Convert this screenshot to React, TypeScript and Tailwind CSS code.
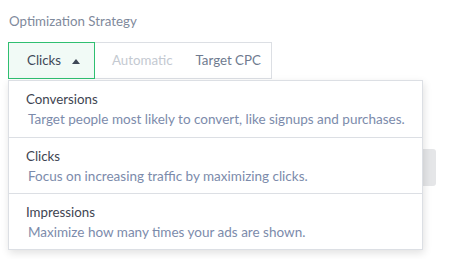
import { useState } from 'react';

const OPTIONS = [
  { title: 'Conversions', desc: 'Target people most likely to convert, like signups and purchases.' },
  { title: 'Clicks', desc: 'Focus on increasing traffic by maximizing clicks.' },
  { title: 'Impressions', desc: 'Maximize how many times your ads are shown.' },
];

export default function App() {
  const [selected, setSelected] = useState('Clicks');

  return (
    <div className="w-[469px] h-[259px] bg-white font-['Lato',sans-serif] relative overflow-hidden">
      <div className="pl-[8px] pt-[12px]">
        {/* Label */}
        <p className="text-[13.3px] leading-[18px] text-[#7f8a9c] pl-[1px]">Optimization Strategy</p>

        {/* Segmented control */}
        <div className="mt-[12px] flex w-[264px] h-[37px] border border-[#dcdfe4] relative">
          <button className="flex items-center gap-[11px] w-[87px] -m-px h-[37px] pl-[18px] border border-[#2fbf71] bg-[#f1faf6] text-[13.3px] text-[#3e4857]">
            {selected}
            <svg width="8" height="5" viewBox="0 0 8 5" className="mt-[1px]">
              <path d="M0 5 L4 0 L8 5 Z" fill="#3e4857" />
            </svg>
          </button>
          <span className="flex items-center pl-[18px] text-[13.3px] text-[#c4c9d1]">Automatic</span>
          <span className="flex items-center pl-[23px] text-[13.3px] text-[#6f7b8f]">Target CPC</span>
        </div>
      </div>

      {/* Partially hidden element behind the menu */}
      <div className="absolute left-[400px] top-[149px] w-[36px] h-[37px] rounded-[3px] bg-[#e5e6e8]" />

      {/* Dropdown menu */}
      <div className="absolute left-[8px] top-[80px] w-[415px] bg-white border border-[#dcdfe4] shadow-[1px_3px_8px_rgba(0,0,0,0.12)]">
        {OPTIONS.map((o, i) => (
          <div
            key={o.title}
            onClick={() => setSelected(o.title)}
            className={`h-[56px] px-[17px] pt-[8px] cursor-pointer ${i > 0 ? 'border-t border-[#dcdfe4]' : ''}`}
          >
            <p className="text-[13.3px] leading-[20px] text-[#3e4451]">{o.title}</p>
            <p className="text-[13.5px] leading-[20px] text-[#7c8bab] pl-[2px]">{o.desc}</p>
          </div>
        ))}
      </div>
    </div>
  );
}
